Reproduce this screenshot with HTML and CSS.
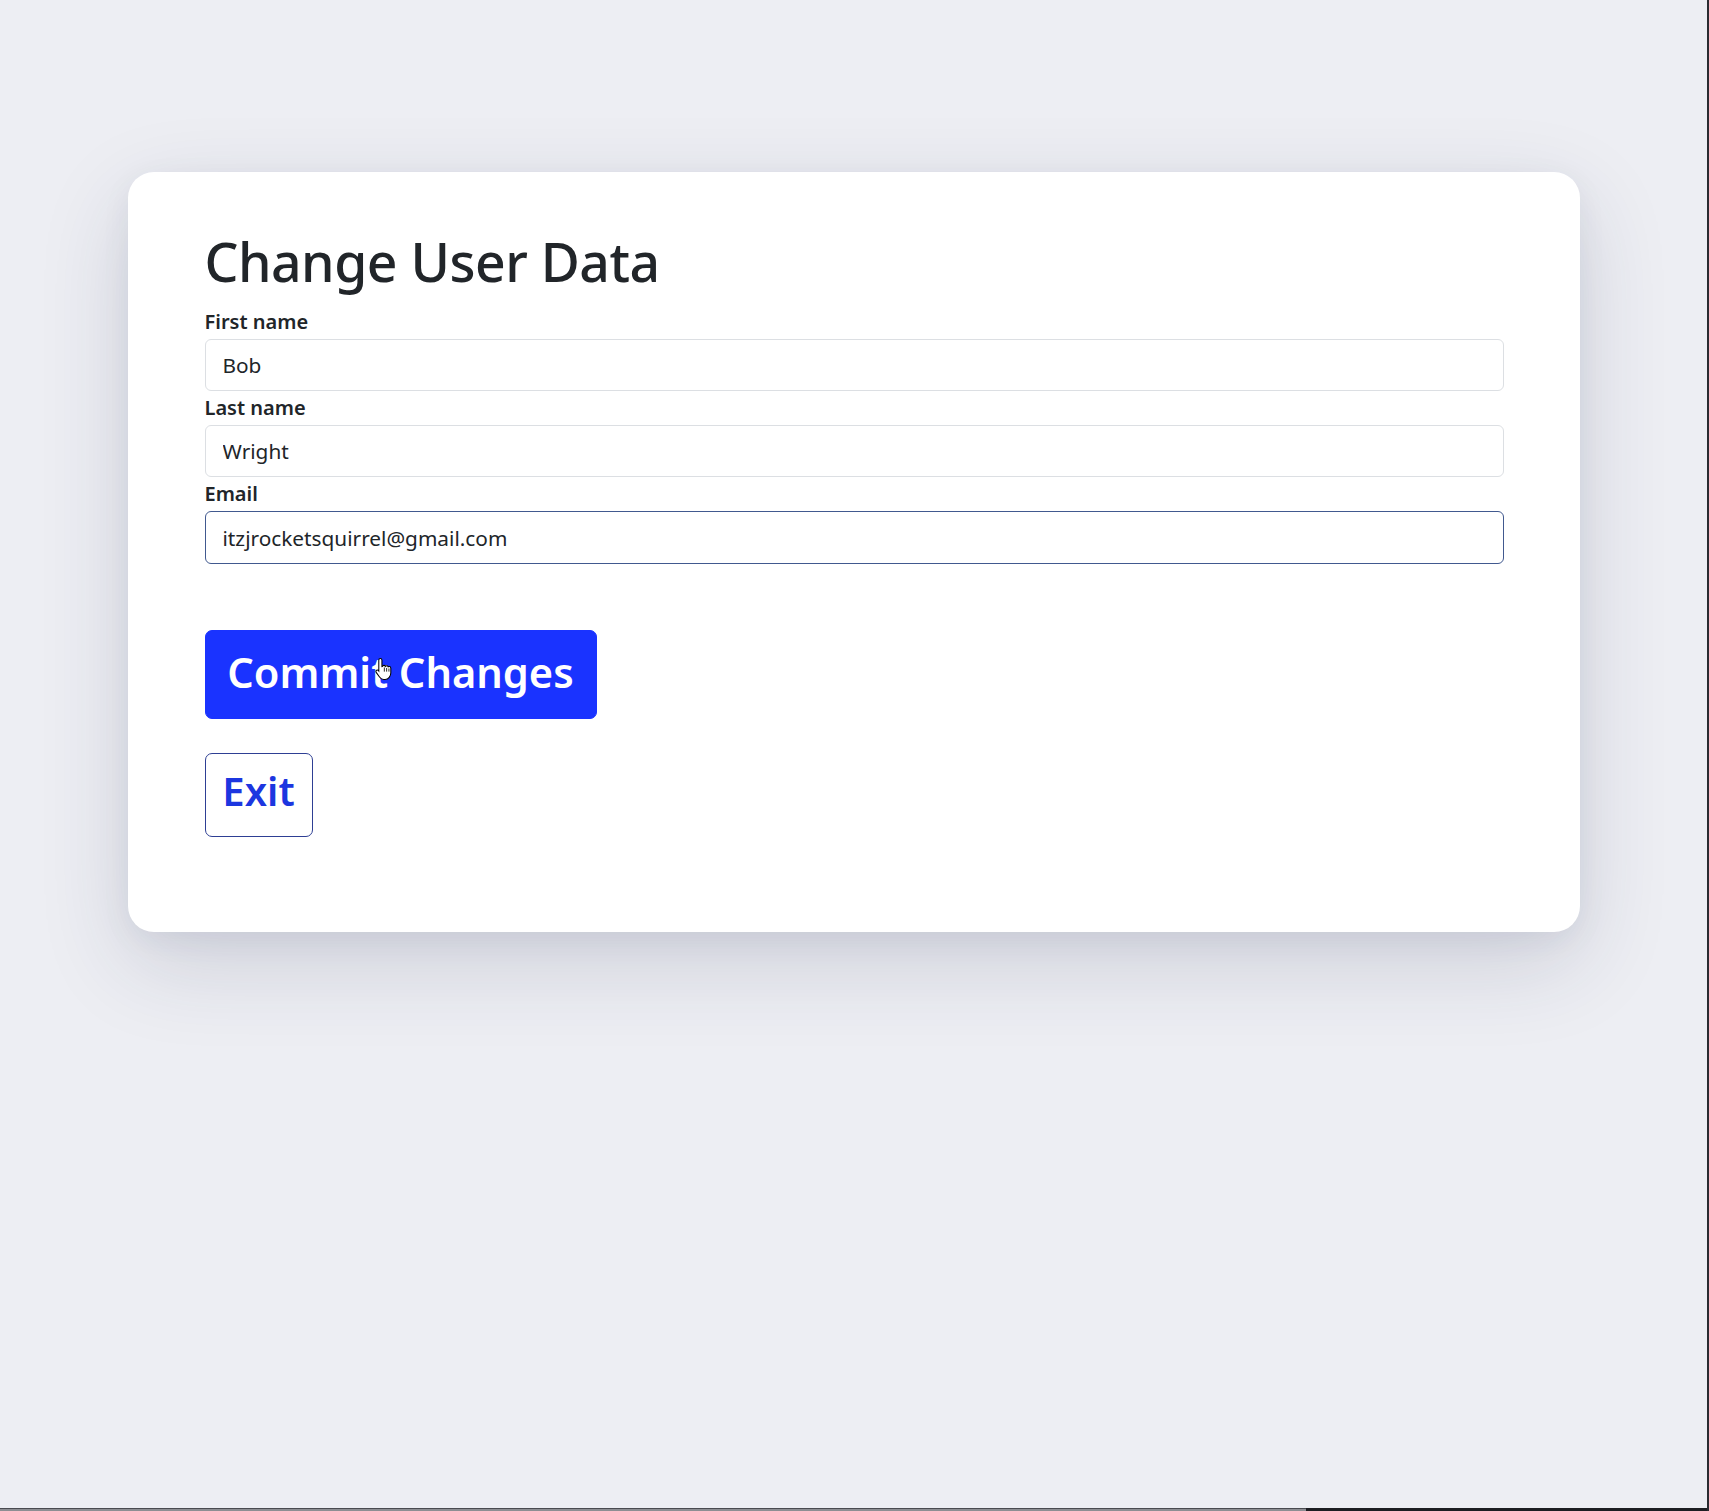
FILE: index.html
```html
<!DOCTYPE html>
<html lang="en">
<head>
<meta charset="utf-8">
<title>Change User Data</title>
<link rel="stylesheet" href="styles.css">
</head>
<body>
<div class="page">
  <main class="card">
    <h1 class="title">Change User Data</h1>
    <form class="form">
      <label class="label" for="fn">First name</label>
      <input class="input" id="fn" type="text" value="Bob">
      <label class="label" for="ln">Last name</label>
      <input class="input" id="ln" type="text" value="Wright">
      <label class="label" for="em">Email</label>
      <input class="input input-focus" id="em" type="email" value="itzjrocketsquirrel@gmail.com">
      <div class="actions">
        <button type="button" class="btn btn-primary">Commit Changes
          <svg class="cursor" width="17" height="23" viewBox="0 0 16 22"><path d="M5 1.5c.9 0 1.5.6 1.5 1.5v6.2l.4-.1c.2-.7.8-1.1 1.5-1.1s1.2.4 1.4 1c.3-.4.8-.6 1.3-.6.7 0 1.2.4 1.4 1 .3-.2.6-.3 1-.3.9 0 1.5.7 1.5 1.6v4.3c0 3.4-2.2 6.5-5.5 6.5H8.2c-1.7 0-3-1-4-2.4L1 14.7c-.5-.7-.3-1.6.4-2 .6-.3 1.3-.2 1.8.3l.3.4V3c0-.9.6-1.5 1.5-1.5z" fill="#fff" stroke="#000" stroke-width="1"/><path d="M8.8 10v4M11 10.5v3.5M13.2 11v3" stroke="#000" stroke-width=".8"/></svg>
        </button>
        <button type="button" class="btn btn-outline">Exit</button>
      </div>
    </form>
  </main>
</div>
<div class="taskbar"><span class="tb-left"></span><span class="tb-right"></span></div>
</body>
</html>
```
FILE: styles.css
```css
html, body {
  margin: 0;
  padding: 0;
}
body {
  background: #edeef3;
  font-family: "Noto Sans", "Open Sans", sans-serif;
  color: #212529;
  height: 1511px;
  overflow: hidden;
  border-right: 2px solid #2a2b30;
  box-sizing: border-box;
  position: relative;
}
.page {
  padding-top: 172px;
  display: flex;
  justify-content: center;
}
.card {
  width: 1452px;
  height: 760px;
  box-sizing: border-box;
  background: #fff;
  border-radius: 26px;
  padding: 46px 76px 0 77px;
  box-shadow: 0 30px 90px rgba(40, 44, 80, 0.16), 0 8px 30px rgba(40, 44, 80, 0.06);
}
.title {
  margin: 2px 0 1px;
  font-size: 53.5px;
  line-height: 84px;
  font-weight: 500;
  letter-spacing: -0.5px;
  color: #212529;
}
.form {
  display: flex;
  flex-direction: column;
}
.label {
  font-size: 20px;
  line-height: 34px;
  font-weight: 600;
  height: 34px;
  color: #212529;
}
.input {
  height: 52px;
  box-sizing: border-box;
  border: 1px solid #dcdfe3;
  border-radius: 6px;
  padding: 0 17px;
  font-family: inherit;
  font-size: 20.8px;
  color: #212529;
  background: #fff;
  outline: none;
}
.input-focus {
  height: 53px;
  border-color: #41598f;
}
.actions {
  display: flex;
  flex-direction: column;
  align-items: flex-start;
  gap: 34px;
  margin-top: 66px;
}
.btn {
  font-family: inherit;
  font-weight: 600;
  border-radius: 7px;
  cursor: pointer;
  box-sizing: border-box;
  position: relative;
  white-space: nowrap;
}
.btn-primary {
  height: 89px;
  width: 392px;
  background: #1a33ff;
  border: 1px solid #1a33ff;
  color: #fff;
  font-size: 41.6px;
  padding: 0 0 5px;
}
.btn-outline {
  height: 84px;
  width: 108px;
  background: #fff;
  border: 1px solid #2e3f94;
  color: #1c36e0;
  font-size: 40px;
  padding: 0 0 10px;
}
.cursor {
  position: absolute;
  left: 169px;
  top: 26px;
}
.taskbar {
  position: absolute;
  left: 0;
  right: 0;
  bottom: 0;
  height: 3px;
  display: flex;
}
.tb-left {
  flex: 0 0 1306px;
  background: #8d8e93;
  border-top: 1px solid #4a4b50;
}
.tb-right {
  flex: 1;
  background: #1d1e22;
}
```
